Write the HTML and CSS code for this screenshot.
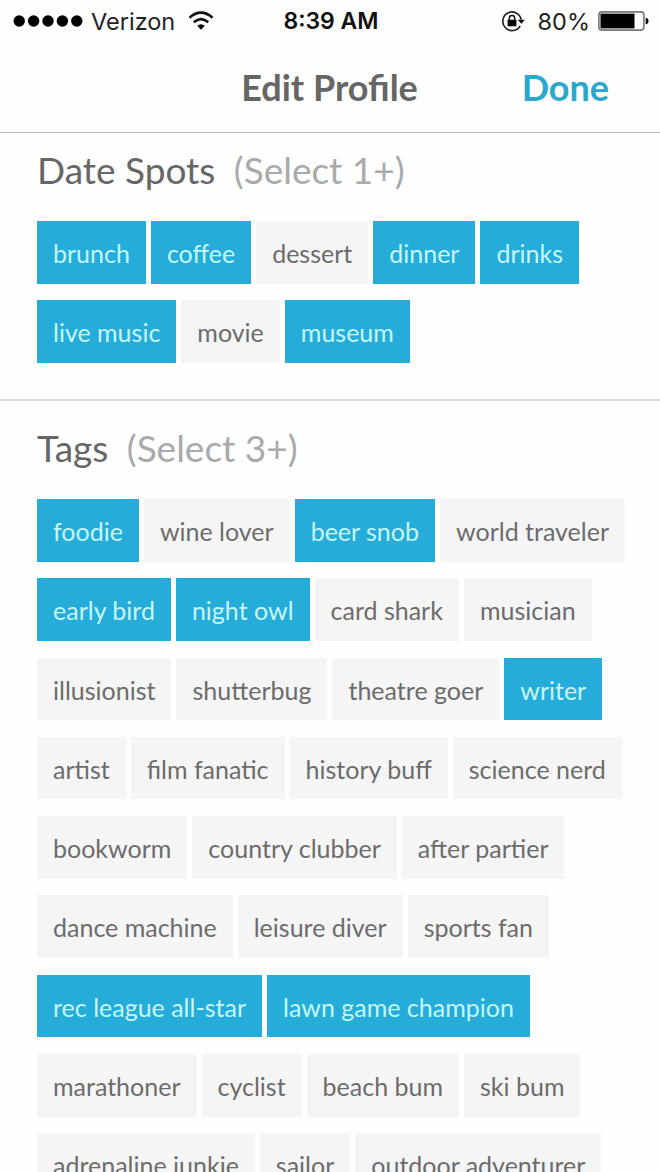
FILE: index.html
```
<!DOCTYPE html>
<html lang="en">
<head>
    <meta charset="UTF-8">
    <meta name="viewport" content="width=device-width, initial-scale=1.0">
    <title>Edit Profile</title>
    <link rel="stylesheet" href="styles.css">
</head>
<body>
    <div class="status-bar">
        <div class="status-left">
            <svg class="signal" width="70" height="14" viewBox="0 0 70 14">
                <circle cx="6.2" cy="7" r="5.7"/>
                <circle cx="20.6" cy="7" r="5.7"/>
                <circle cx="35" cy="7" r="5.7"/>
                <circle cx="49.4" cy="7" r="5.7"/>
                <circle cx="63.8" cy="7" r="5.7"/>
            </svg>
            <span class="carrier">Verizon</span>
            <svg class="wifi" width="26" height="20" viewBox="0 0 26 20">
                <path d="M1.5 6.7Q13 -3.300 24.500 6.700M5.800 11.300Q13 5 20.200 11.300" fill="none" stroke="#111" stroke-width="2.600"/>
                <path d="M9.200 14.700Q13 11.700 16.800 14.700L13 18.800Z"/>
            </svg>
        </div>
        <span class="time">8:39 AM</span>
        <div class="status-right">
            <svg class="lock" width="24" height="22" viewBox="0 0 24 22">
                <path d="M19.200 15.800A9.300 9.300 0 1 1 20.200 9.500" fill="none" stroke="#222" stroke-width="1.700"/>
                <path d="M16.800 9.700H23.800L20.300 13.700Z"/>
                <rect x="6.600" y="9.700" width="8.800" height="6.600" rx="0.600"/>
                <path d="M8.300 10V8.200a2.700 2.700 0 0 1 5.400 0V10" fill="none" stroke="#111" stroke-width="1.500"/>
            </svg>
            <span class="percent">80%</span>
            <svg class="battery" width="51" height="20" viewBox="0 0 51 20">
                <rect x="0.900" y="0.900" width="45" height="18.200" rx="3" fill="none" stroke="#777" stroke-width="1.600"/>
                <rect x="2.500" y="2.600" width="34" height="14.800"/>
                <path d="M47.700 6.700q2.800 0.500 2.800 3.300t-2.800 3.300z"/>
            </svg>
        </div>
    </div>

    <div class="navbar">
        <h1>Edit Profile</h1>
        <a class="done">Done</a>
    </div>

    <div class="section">
        <h2>Date Spots <span class="hint">(Select 1+)</span></h2>
        <div class="tags">
            <span class="tag selected">brunch</span>
            <span class="tag selected">coffee</span>
            <span class="tag">dessert</span>
            <span class="tag selected">dinner</span>
            <span class="tag selected">drinks</span>
            <span class="tag selected">live music</span>
            <span class="tag">movie</span>
            <span class="tag selected">museum</span>
        </div>
    </div>

    <div class="section">
        <h2>Tags <span class="hint">(Select 3+)</span></h2>
        <div class="tags">
            <span class="tag selected">foodie</span>
            <span class="tag">wine lover</span>
            <span class="tag selected">beer snob</span>
            <span class="tag">world traveler</span>
            <span class="tag selected">early bird</span>
            <span class="tag selected">night owl</span>
            <span class="tag">card shark</span>
            <span class="tag">musician</span>
            <span class="tag">illusionist</span>
            <span class="tag">shutterbug</span>
            <span class="tag">theatre goer</span>
            <span class="tag selected">writer</span>
            <span class="tag">artist</span>
            <span class="tag">film fanatic</span>
            <span class="tag">history buff</span>
            <span class="tag">science nerd</span>
            <span class="tag">bookworm</span>
            <span class="tag">country clubber</span>
            <span class="tag">after partier</span>
            <span class="tag">dance machine</span>
            <span class="tag">leisure diver</span>
            <span class="tag">sports fan</span>
            <span class="tag selected">rec league all-star</span>
            <span class="tag selected">lawn game champion</span>
            <span class="tag">marathoner</span>
            <span class="tag">cyclist</span>
            <span class="tag">beach bum</span>
            <span class="tag">ski bum</span>
            <span class="tag">adrenaline junkie</span>
            <span class="tag">sailor</span>
            <span class="tag">outdoor adventurer</span>
        </div>
    </div>
</body>
</html>
```

FILE: styles.css
```
* {
    box-sizing: border-box;
}
body {
    margin: 0;
    height: 1172px;
    overflow: hidden;
    background-color: #fefefe;
    font-family: Lato, sans-serif;
    color: #666;
}
.status-bar {
    display: grid;
    grid-template-columns: 1fr auto 1fr;
    align-items: center;
    height: 42px;
    padding: 0 11px 0 13px;
    font-family: Inter, "Liberation Sans", sans-serif;
    font-size: 24px;
    color: #222;
}
.status-left, .status-right {
    display: flex;
    align-items: center;
}
.status-right {
    justify-content: flex-end;
}
.carrier {
    margin: 0 13px 0 8px;
    font-size: 23.5px;
}
.time {
    font-size: 23px;
    font-weight: 600;
    color: #111;
}
.percent {
    margin: 0 8px 0 13px;
    font-size: 23.5px;
}
.navbar {
    display: grid;
    grid-template-columns: 1fr auto 1fr;
    align-items: center;
    height: 91px;
    padding-right: 51px;
    padding-left: 50px;
    border-bottom: 1px solid #bbb;
}
.navbar h1 {
    grid-column: 2;
    margin: 0;
    font-size: 36px;
    font-weight: 700;
}
.done {
    justify-self: end;
    font-size: 36px;
    font-weight: 700;
    color: #2ba8cc;
}
.section {
    height: 266px;
    padding: 14px 20px 0 37px;
}
.section + .section {
    height: auto;
    padding-top: 24px;
    border-top: 2px solid #ddd;
}
h2 {
    margin: 0 0 29px;
    font-size: 37px;
    font-weight: 400;
    line-height: 45px;
}
.hint {
    margin-left: 9px;
    color: #aaa;
}
.tags {
    display: flex;
    flex-wrap: wrap;
    gap: 16.8px 5px;
}
.tag {
    height: 62.5px;
    padding: 0 16px;
    font-size: 25px;
    line-height: 64px;
    background-color: #f5f5f5;
    color: #6c6c6c;
}
.selected {
    background-color: #25acd8;
    color: #c4f7ff;
}
```
